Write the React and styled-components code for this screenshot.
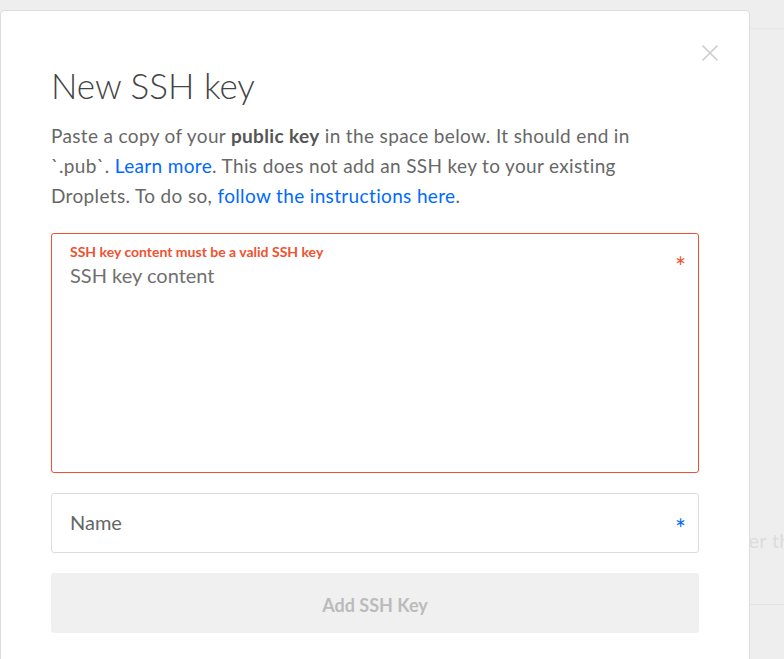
import React from 'react';
import styled, { createGlobalStyle } from 'styled-components';

const GlobalStyle = createGlobalStyle`
  html, body {
    margin: 0;
    padding: 0;
    background: #eeeeee;
    font-family: Lato, "Open Sans", sans-serif;
  }
`;

const Page = styled.div`
  position: relative;
  width: 784px;
  height: 659px;
  overflow: hidden;
  background: #eeeeee;
`;

const BackCard = styled.div`
  margin-top: 28px;
  border-top: 1px solid #e6e6e6;
  height: 576px;
  display: flex;
  flex-direction: column;
  justify-content: flex-end;
`;

const BackRow = styled.div`
  height: 128px;
  padding-left: 712px;
  font-size: 20px;
  letter-spacing: 0.3px;
  color: #dcdcdc;
  white-space: nowrap;
  display: flex;
  align-items: center;
  border-bottom: 1px solid #e3e3e3;
`;

const Modal = styled.div`
  position: absolute;
  left: 0;
  top: 10px;
  width: 750px;
  height: 700px;
  box-sizing: border-box;
  background: #ffffff;
  border: 1px solid #dddddd;
  border-radius: 4px;
  padding: 52px 50px 0 50px;
`;

const Close = styled.button`
  position: absolute;
  top: 33px;
  right: 30px;
  width: 18px;
  height: 18px;
  padding: 0;
  border: none;
  background: none;
  cursor: pointer;
  display: flex;
`;

const Title = styled.h1`
  margin: 0;
  font-size: 35px;
  font-weight: 300;
  line-height: 44px;
  color: #444444;
`;

const Lead = styled.p`
  margin: 14px 0 0;
  font-size: 19px;
  letter-spacing: 0.35px;
  line-height: 30px;
  color: #676767;
  white-space: nowrap;

  strong {
    font-weight: 700;
    color: #555555;
  }
  a {
    color: #0069ff;
    text-decoration: none;
  }
`;

const Form = styled.form`
  margin-top: 22px;
  display: flex;
  flex-direction: column;
  gap: 20px;
`;

const Field = styled.div`
  position: relative;
  box-sizing: border-box;
  height: ${p => p.$height}px;
  border: 1px solid ${p => (p.$error ? '#f0512f' : '#dddddd')};
  border-radius: 3px;
  padding: ${p => (p.$error ? '10px 40px 0 18px' : '0 40px 3px 18px')};
  display: flex;
  flex-direction: column;
  justify-content: ${p => (p.$error ? 'flex-start' : 'center')};
`;

const ErrorLabel = styled.label`
  font-size: 14px;
  font-weight: 700;
  line-height: 16px;
  color: #f0512f;
`;

const KeyArea = styled.textarea`
  flex: 1;
  border: none;
  outline: none;
  resize: none;
  padding: 0;
  margin-top: 3px;
  font-family: Lato, "Open Sans", sans-serif;
  font-size: 20px;
  line-height: 24px;
  color: #444;

  &::placeholder {
    color: #707070;
  }
`;

const TextInput = styled.input`
  border: none;
  outline: none;
  padding: 0;
  font-family: Lato, "Open Sans", sans-serif;
  font-size: 20px;
  color: #444;

  &::placeholder {
    color: #666666;
  }
`;

const Required = styled.span`
  position: absolute;
  right: 12px;
  top: ${p => p.$top}px;
  font-size: 26px;
  line-height: 1;
  color: ${p => p.$color};
`;

const Submit = styled.button`
  height: 60px;
  padding: 4px 0 0;
  border: none;
  border-radius: 3px;
  background: #f0f0f0;
  color: #bbbbbb;
  font-family: Lato, "Open Sans", sans-serif;
  font-size: 18px;
  font-weight: 700;
  cursor: not-allowed;
`;

function App() {
  return (
    <>
      <GlobalStyle />
      <Page>
        <BackCard>
          <BackRow>rather than using a password</BackRow>
        </BackCard>
        <Modal>
          <Close aria-label="Close">
            <svg width="18" height="18" viewBox="0 0 18 18">
              <path d="M1.5 1.5 L16.5 16.5 M16.5 1.5 L1.5 16.5" stroke="#cccccc" strokeWidth="1.6" fill="none" />
            </svg>
          </Close>
          <Title>New SSH key</Title>
          <Lead>
            Paste a copy of your <strong>public key</strong> in the space below. It should end in
            <br />
            `.pub`. <a href="#">Learn more</a>. This does not add an SSH key to your existing
            <br />
            Droplets. To do so, <a href="#">follow the instructions here</a>.
          </Lead>
          <Form onSubmit={e => e.preventDefault()}>
            <Field $error $height={240}>
              <ErrorLabel>SSH key content must be a valid SSH key</ErrorLabel>
              <KeyArea placeholder="SSH key content" />
              <Required $top={20} $color="#f0512f">*</Required>
            </Field>
            <Field $height={60}>
              <TextInput placeholder="Name" />
              <Required $top={22} $color="#0069ff">*</Required>
            </Field>
            <Submit type="submit" disabled>Add SSH Key</Submit>
          </Form>
        </Modal>
      </Page>
    </>
  );
}

export default App;
